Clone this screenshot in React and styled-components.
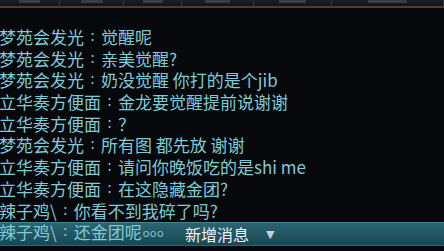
import React from 'react';
import styled, { createGlobalStyle } from 'styled-components';

const GlobalStyle = createGlobalStyle`
  html, body {
    margin: 0;
    padding: 0;
    background: #07080b;
  }
`;

const tabs = [60, 64, 58, 72, 78, 112];

const messages = [
  ['梦苑会发光', '觉醒呢'],
  ['梦苑会发光', '亲美觉醒?'],
  ['梦苑会发光', '奶没觉醒 你打的是个jib'],
  ['立华奏方便面', '金龙要觉醒提前说谢谢'],
  ['立华奏方便面', '？'],
  ['梦苑会发光', '所有图 都先放 谢谢'],
  ['立华奏方便面', '请问你晚饭吃的是shi me'],
  ['立华奏方便面', '在这隐藏金团?'],
  ['辣子鸡\\', '你看不到我碎了吗?'],
  ['辣子鸡\\', '还金团呢', 'ooo'],
];

export default function App() {
  return (
    <>
      <GlobalStyle />
      <Screen>
        <TabStrip>
          {tabs.map((w, i) => (
            <Tab key={i} $w={w}>
              <TabLabel $w={Math.round(w * 0.35)} />
            </Tab>
          ))}
        </TabStrip>
        <Chat>
          {messages.map(([name, text, tail], i) => (
            <Line key={i}>
              {name}
              <Colon>:</Colon>
              {text}
              {tail && <Tail>{tail}</Tail>}
            </Line>
          ))}
        </Chat>
        <NewBar>
          <NewText>新增消息</NewText>
          <Arrow>▼</Arrow>
        </NewBar>
      </Screen>
    </>
  );
}

const Screen = styled.div`
  position: relative;
  width: 444px;
  height: 251px;
  overflow: hidden;
  background: #07080b;
  display: flex;
  flex-direction: column;
`;

const TabStrip = styled.div`
  display: flex;
  height: 6px;
  background: #101218;
  border-bottom: 2px solid #4e3d33;
`;

const Tab = styled.div`
  width: ${p => p.$w}px;
  flex-shrink: 0;
  display: flex;
  justify-content: center;
  background: linear-gradient(#1c1e26, #121419);
  border-right: 1px solid #34363d;
  box-sizing: border-box;
`;

const TabLabel = styled.div`
  width: ${p => p.$w}px;
  height: 3px;
  background: #3a3c44;
`;

const Chat = styled.div`
  position: relative;
  z-index: 1;
  padding-top: 18px;
  display: flex;
  flex-direction: column;
`;

const Line = styled.div`
  font-family: "Noto Sans CJK SC", "DejaVu Sans", sans-serif;
  font-size: 17px;
  line-height: 21.7px;
  height: 21.7px;
  color: #7fcbd6;
  white-space: nowrap;
  margin-left: -1px;
  display: flex;
  align-items: center;
`;

const Colon = styled.span`
  display: inline-block;
  width: 17px;
  text-align: center;
  font-family: "DejaVu Sans", sans-serif;
  font-size: 15px;
`;

const Tail = styled.span`
  font-size: 11px;
  letter-spacing: 0.5px;
  margin-left: 1px;
  padding-top: 2px;
`;

const NewBar = styled.div`
  position: absolute;
  left: 0;
  right: 0;
  top: 222px;
  height: 24px;
  box-sizing: border-box;
  border-top: 1px solid #3f8594;
  border-bottom: 1px solid #2f6672;
  background: linear-gradient(rgba(46, 108, 122, 0.92), rgba(28, 76, 90, 0.92));
  display: flex;
  align-items: center;
  gap: 17px;
  padding-left: 185px;
`;

const NewText = styled.span`
  font-family: "Noto Sans CJK SC", sans-serif;
  font-size: 16px;
  color: #f2f4f4;
  position: relative;
  z-index: 2;
`;

const Arrow = styled.span`
  font-family: "DejaVu Sans", sans-serif;
  font-size: 11px;
  color: #c6d0d4;
  position: relative;
  z-index: 2;
`;
